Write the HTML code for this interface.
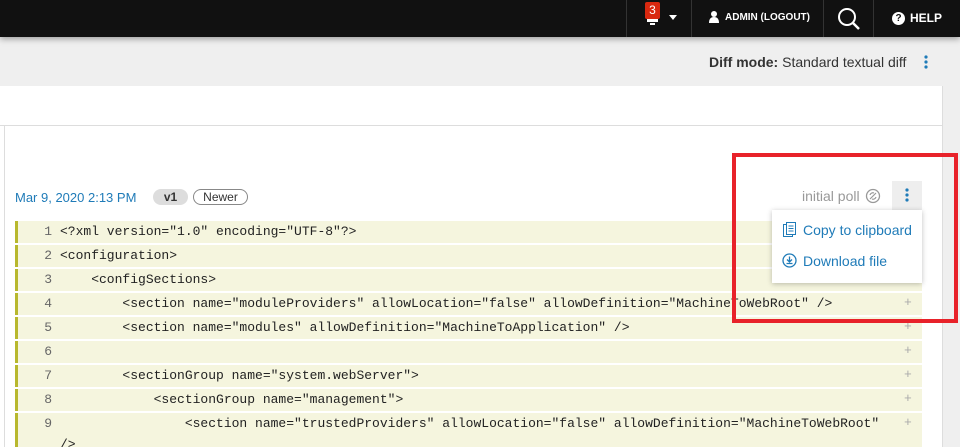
<!DOCTYPE html>
<html style="overflow:hidden;height:447px"><head><style>
*{margin:0;padding:0;box-sizing:border-box}
body{width:960px;height:447px;overflow:hidden;background:#efefef;font-family:"Liberation Sans",sans-serif;position:relative}
.top{position:absolute;left:0;top:0;width:960px;height:37px;background:#111;box-shadow:0 2px 6px rgba(0,0,0,.35);z-index:2}
.sep{position:absolute;top:0;width:1px;height:37px;background:#333}
.card{position:absolute;left:0;top:86px;width:943px;height:361px;background:#fff;border-right:1px solid #ddd}
.hl{position:absolute;left:0;top:125px;width:943px;height:1px;background:#ddd}
.vl{position:absolute;left:4px;top:125px;width:1px;height:322px;background:#ddd}
.row{position:absolute;left:15px;width:907px;height:22px;background:#f5f5de;border-left:3px solid #b8b82e;font-family:"Liberation Mono",monospace;font-size:13px;color:#222;line-height:22px}
.row .n{position:absolute;left:0;width:34px;text-align:right;color:#666}
.row .c{position:absolute;left:42px;white-space:pre}
.row .p{position:absolute;left:886px;color:#aaa;font-size:13px;top:-1px}
.blue{color:#1f7bb8}
</style></head><body>
<div class="top">
  <div class="sep" style="left:626px"></div><div class="sep" style="left:691px"></div><div class="sep" style="left:823px"></div><div class="sep" style="left:873px"></div>
  <div style="position:absolute;left:645px;top:2px;width:15px;height:17px;background:#d9280f;color:#fff;font-size:12px;text-align:center;line-height:16px;border-radius:2px">3</div>
  <div style="position:absolute;left:647px;top:19px;width:11px;height:3px;background:#fff"></div>
  <div style="position:absolute;left:650px;top:23px;width:5px;height:2px;background:#fff"></div>
  <div style="position:absolute;left:669px;top:15px;border-left:4px solid transparent;border-right:4px solid transparent;border-top:5px solid #fff"></div>
  <svg style="position:absolute;left:709px;top:11px" width="10" height="12"><circle cx="5" cy="3" r="3" fill="#fff"/><path d="M0 12 Q0 6 5 6 Q10 6 10 12Z" fill="#fff"/></svg>
  <div style="position:absolute;left:725px;top:12px;color:#fff;font-size:10px;font-weight:bold">ADMIN (LOGOUT)</div>
  <svg style="position:absolute;left:837px;top:7px" width="24" height="24"><circle cx="10" cy="10" r="8" fill="none" stroke="#fff" stroke-width="2"/><path d="M16 16 L22 22" stroke="#fff" stroke-width="2.5"/></svg>
  <div style="position:absolute;left:892px;top:12px;width:13px;height:13px;border-radius:50%;background:#fff;color:#111;font-size:10px;font-weight:bold;text-align:center;line-height:13px">?</div>
  <div style="position:absolute;left:910px;top:11px;color:#fff;font-size:12px;font-weight:bold">HELP</div>
</div>
<div style="position:absolute;left:709px;top:54px;font-size:14px;color:#333"><b>Diff mode:</b> Standard textual diff</div>
<svg style="position:absolute;left:924px;top:55px" width="4" height="14"><circle cx="2" cy="2" r="1.6" fill="#1f7bb8"/><circle cx="2" cy="7" r="1.6" fill="#1f7bb8"/><circle cx="2" cy="12" r="1.6" fill="#1f7bb8"/></svg>
<div class="card"></div><div class="hl"></div><div class="vl"></div>
<div class="blue" style="position:absolute;left:15px;top:190px;font-size:13px">Mar 9, 2020 2:13 PM</div>
<div style="position:absolute;left:153px;top:189px;width:35px;height:16px;border-radius:8px;background:#ddd;font-size:12px;font-weight:bold;text-align:center;line-height:16px;color:#333">v1</div>
<div style="position:absolute;left:193px;top:189px;width:55px;height:16px;border-radius:8px;border:1px solid #888;font-size:12px;text-align:center;line-height:14px;color:#333">Newer</div>
<div style="position:absolute;left:802px;top:188px;font-size:14px;color:#999">initial poll</div>
<svg style="position:absolute;left:865px;top:188px" width="16" height="16"><circle cx="8" cy="8" r="6.5" fill="none" stroke="#999" stroke-width="1.3"/><path d="M5 11 L11 5 M5 7 a3 3 0 0 1 4-2 M11 9 a3 3 0 0 1-4 2" stroke="#999" fill="none" stroke-width="1.2"/></svg>
<div style="position:absolute;left:892px;top:181px;width:30px;height:29px;background:#eee"></div>
<svg style="position:absolute;left:905px;top:188px" width="4" height="14"><circle cx="2" cy="2" r="1.6" fill="#1f7bb8"/><circle cx="2" cy="7" r="1.6" fill="#1f7bb8"/><circle cx="2" cy="12" r="1.6" fill="#1f7bb8"/></svg>

<div class="row" style="top:221px"><span class="n">1</span><span class="c">&lt;?xml version="1.0" encoding="UTF-8"?&gt;</span></div>
<div class="row" style="top:245px"><span class="n">2</span><span class="c">&lt;configuration&gt;</span></div>
<div class="row" style="top:269px"><span class="n">3</span><span class="c">    &lt;configSections&gt;</span></div>
<div class="row" style="top:293px"><span class="n">4</span><span class="c">        &lt;section name="moduleProviders" allowLocation="false" allowDefinition="MachineToWebRoot" /&gt;</span><span class="p">+</span></div>
<div class="row" style="top:317px"><span class="n">5</span><span class="c">        &lt;section name="modules" allowDefinition="MachineToApplication" /&gt;</span><span class="p">+</span></div>
<div class="row" style="top:341px"><span class="n">6</span><span class="c"></span><span class="p">+</span></div>
<div class="row" style="top:365px"><span class="n">7</span><span class="c">        &lt;sectionGroup name="system.webServer"&gt;</span><span class="p">+</span></div>
<div class="row" style="top:389px"><span class="n">8</span><span class="c">            &lt;sectionGroup name="management"&gt;</span><span class="p">+</span></div>
<div class="row" style="top:413px;height:34px"><span class="n">9</span><span class="c" style="line-height:21px;top:0">                &lt;section name="trustedProviders" allowLocation="false" allowDefinition="MachineToWebRoot"
/&gt;</span><span class="p">+</span></div>

<div style="position:absolute;left:772px;top:210px;width:150px;height:73px;background:#fff;box-shadow:0 1px 5px rgba(0,0,0,.25)">
  <svg style="position:absolute;left:11px;top:12px" width="14" height="16"><rect x="0.5" y="2.5" width="9" height="12" fill="#fff" stroke="#1f7bb8"/><rect x="3.5" y="0.5" width="9" height="12" fill="#fff" stroke="#1f7bb8"/><path d="M5.5 4h5M5.5 6.5h5M5.5 9h5" stroke="#1f7bb8"/></svg>
  <div class="blue" style="position:absolute;left:31px;top:12px;font-size:14px">Copy to clipboard</div>
  <svg style="position:absolute;left:10px;top:43px" width="15" height="15"><circle cx="7.5" cy="7.5" r="6.5" fill="none" stroke="#1f7bb8" stroke-width="1.3"/><path d="M7.5 3.5v5M5 6.5l2.5 2.5 2.5-2.5M4.5 10.5h6" stroke="#1f7bb8" fill="none" stroke-width="1.3"/></svg>
  <div class="blue" style="position:absolute;left:31px;top:43px;font-size:14px">Download file</div>
</div>
<div style="position:absolute;left:732px;top:153px;width:226px;height:170px;border:4px solid #e8222a"></div>
</body></html>
